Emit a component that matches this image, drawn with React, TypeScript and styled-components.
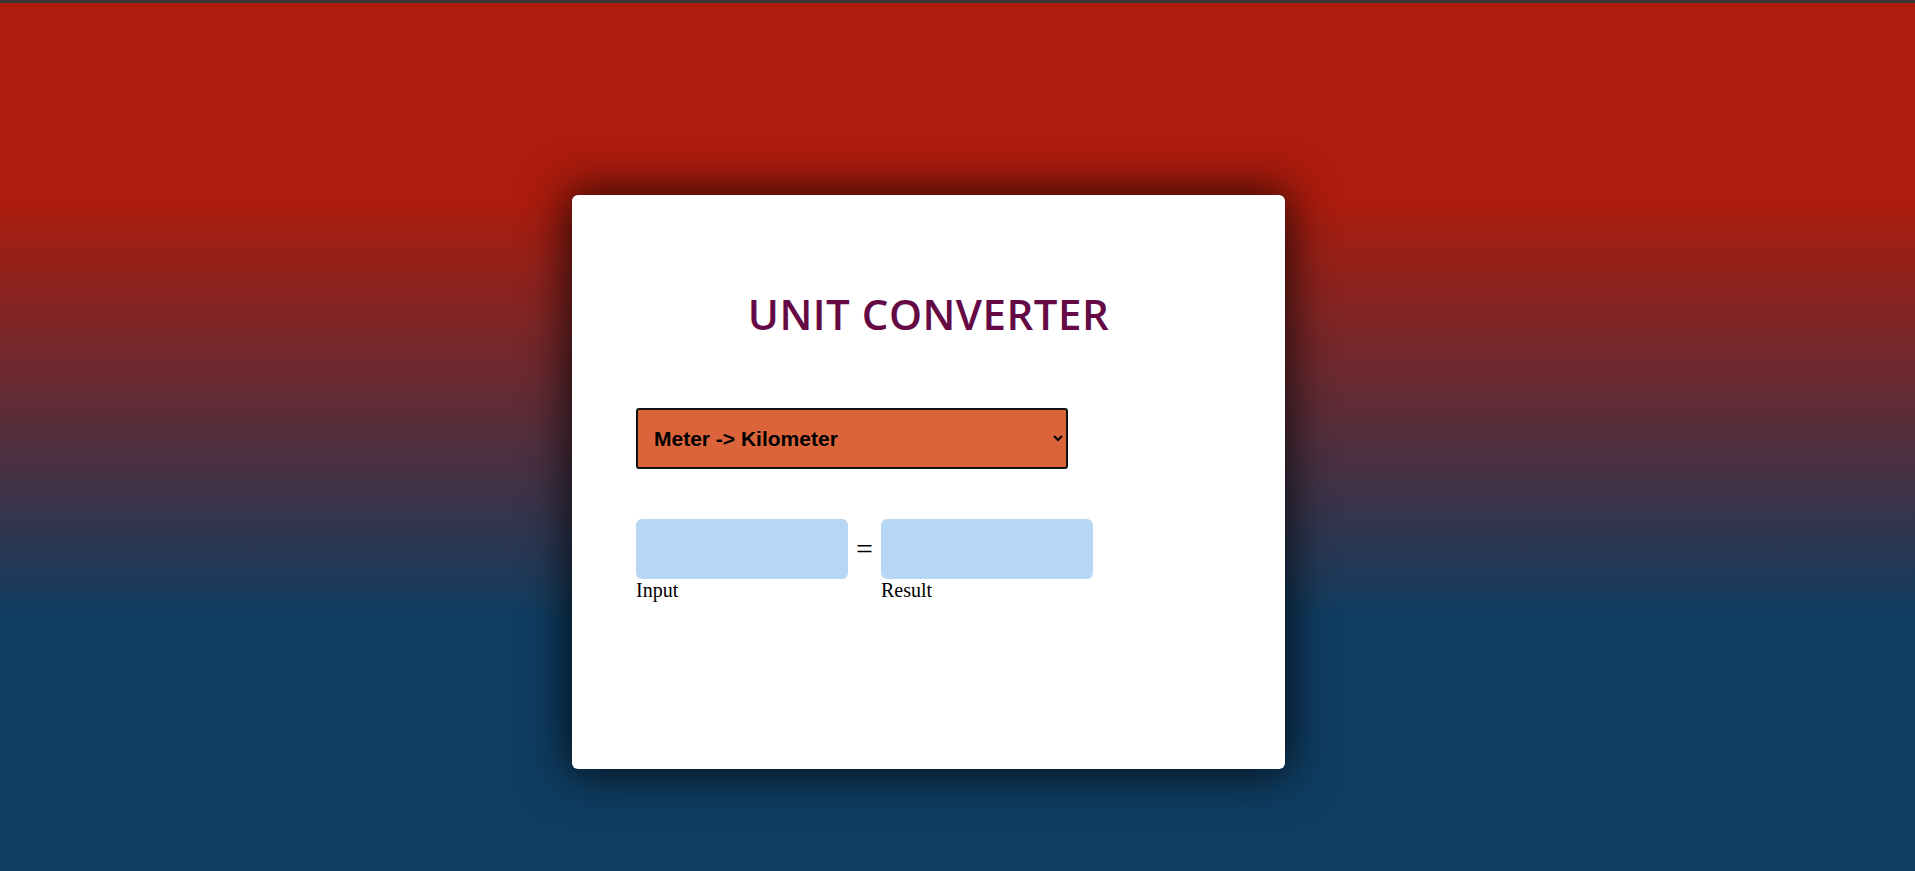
import React, { useState } from 'react';
import styled, { createGlobalStyle } from 'styled-components';

const GlobalStyle = createGlobalStyle`
  html, body {
    margin: 0;
    padding: 0;
    height: 100%;
  }
  body {
    border-top: 3px solid #383838;
    box-sizing: border-box;
    background: linear-gradient(180deg, #ad1c0d 0%, #ad1c0d 23%, #0f3d62 71%, #0f3d62 100%);
    font-family: "Liberation Serif", serif;
  }
  #root {
    height: 100%;
  }
`;

const Page = styled.div`
  height: 868px;
  display: flex;
  justify-content: flex-start;
  padding: 192px 0 0 572px;
  box-sizing: border-box;
`;

const Card = styled.div`
  width: 713px;
  height: 574px;
  background: #fff;
  border-radius: 6px;
  box-shadow: 0 0 45px 5px rgba(0, 0, 0, 0.75);
  padding: 0 64px;
  box-sizing: border-box;
  display: flex;
  flex-direction: column;
`;

const Title = styled.h1`
  margin: 93px 0 0;
  text-align: center;
  font-family: "Open Sans", sans-serif;
  font-weight: 600;
  font-size: 42px;
  line-height: 52px;
  color: #650a45;
  letter-spacing: 0.5px;
`;

const Select = styled.select`
  margin-top: 68px;
  width: 432px;
  height: 61px;
  border: 2px solid #111;
  border-radius: 3px;
  background: #db643b;
  color: #000;
  font-family: "Liberation Sans", Arial, sans-serif;
  font-weight: 700;
  font-size: 21px;
  padding: 0 8px 0 12px;
  outline: none;
`;

const Row = styled.div`
  margin-top: 50px;
  display: flex;
  align-items: flex-start;
  gap: 8px;
`;

const Field = styled.label`
  display: flex;
  flex-direction: column;
  font-family: "Liberation Serif", serif;
  font-size: 20px;
  color: #000;
`;

const Box = styled.input`
  width: 212px;
  height: 60px;
  border: none;
  border-radius: 6px;
  background: #b6d6f4;
  box-sizing: border-box;
  padding: 0 10px;
  font-size: 18px;
  outline: none;
`;

const Equals = styled.span`
  font-family: "Liberation Serif", serif;
  font-size: 30px;
  line-height: 60px;
  color: #000;
`;

const factors: Record<string, number> = {
  m_km: 0.001,
  km_m: 1000,
  cm_m: 0.01,
  m_cm: 100,
};

export default function App() {
  const [mode, setMode] = useState('m_km');
  const [value, setValue] = useState('');
  const result = value === '' || isNaN(Number(value)) ? '' : String(Number(value) * factors[mode]);

  return (
    <>
      <GlobalStyle />
      <Page>
        <Card>
          <Title>UNIT CONVERTER</Title>
          <Select value={mode} onChange={(e) => setMode(e.target.value)}>
            <option value="m_km">Meter -&gt; Kilometer</option>
            <option value="km_m">Kilometer -&gt; Meter</option>
            <option value="cm_m">Centimeter -&gt; Meter</option>
            <option value="m_cm">Meter -&gt; Centimeter</option>
          </Select>
          <Row>
            <Field>
              <Box value={value} onChange={(e) => setValue(e.target.value)} />
              Input
            </Field>
            <Equals>=</Equals>
            <Field>
              <Box value={result} readOnly />
              Result
            </Field>
          </Row>
        </Card>
      </Page>
    </>
  );
}
